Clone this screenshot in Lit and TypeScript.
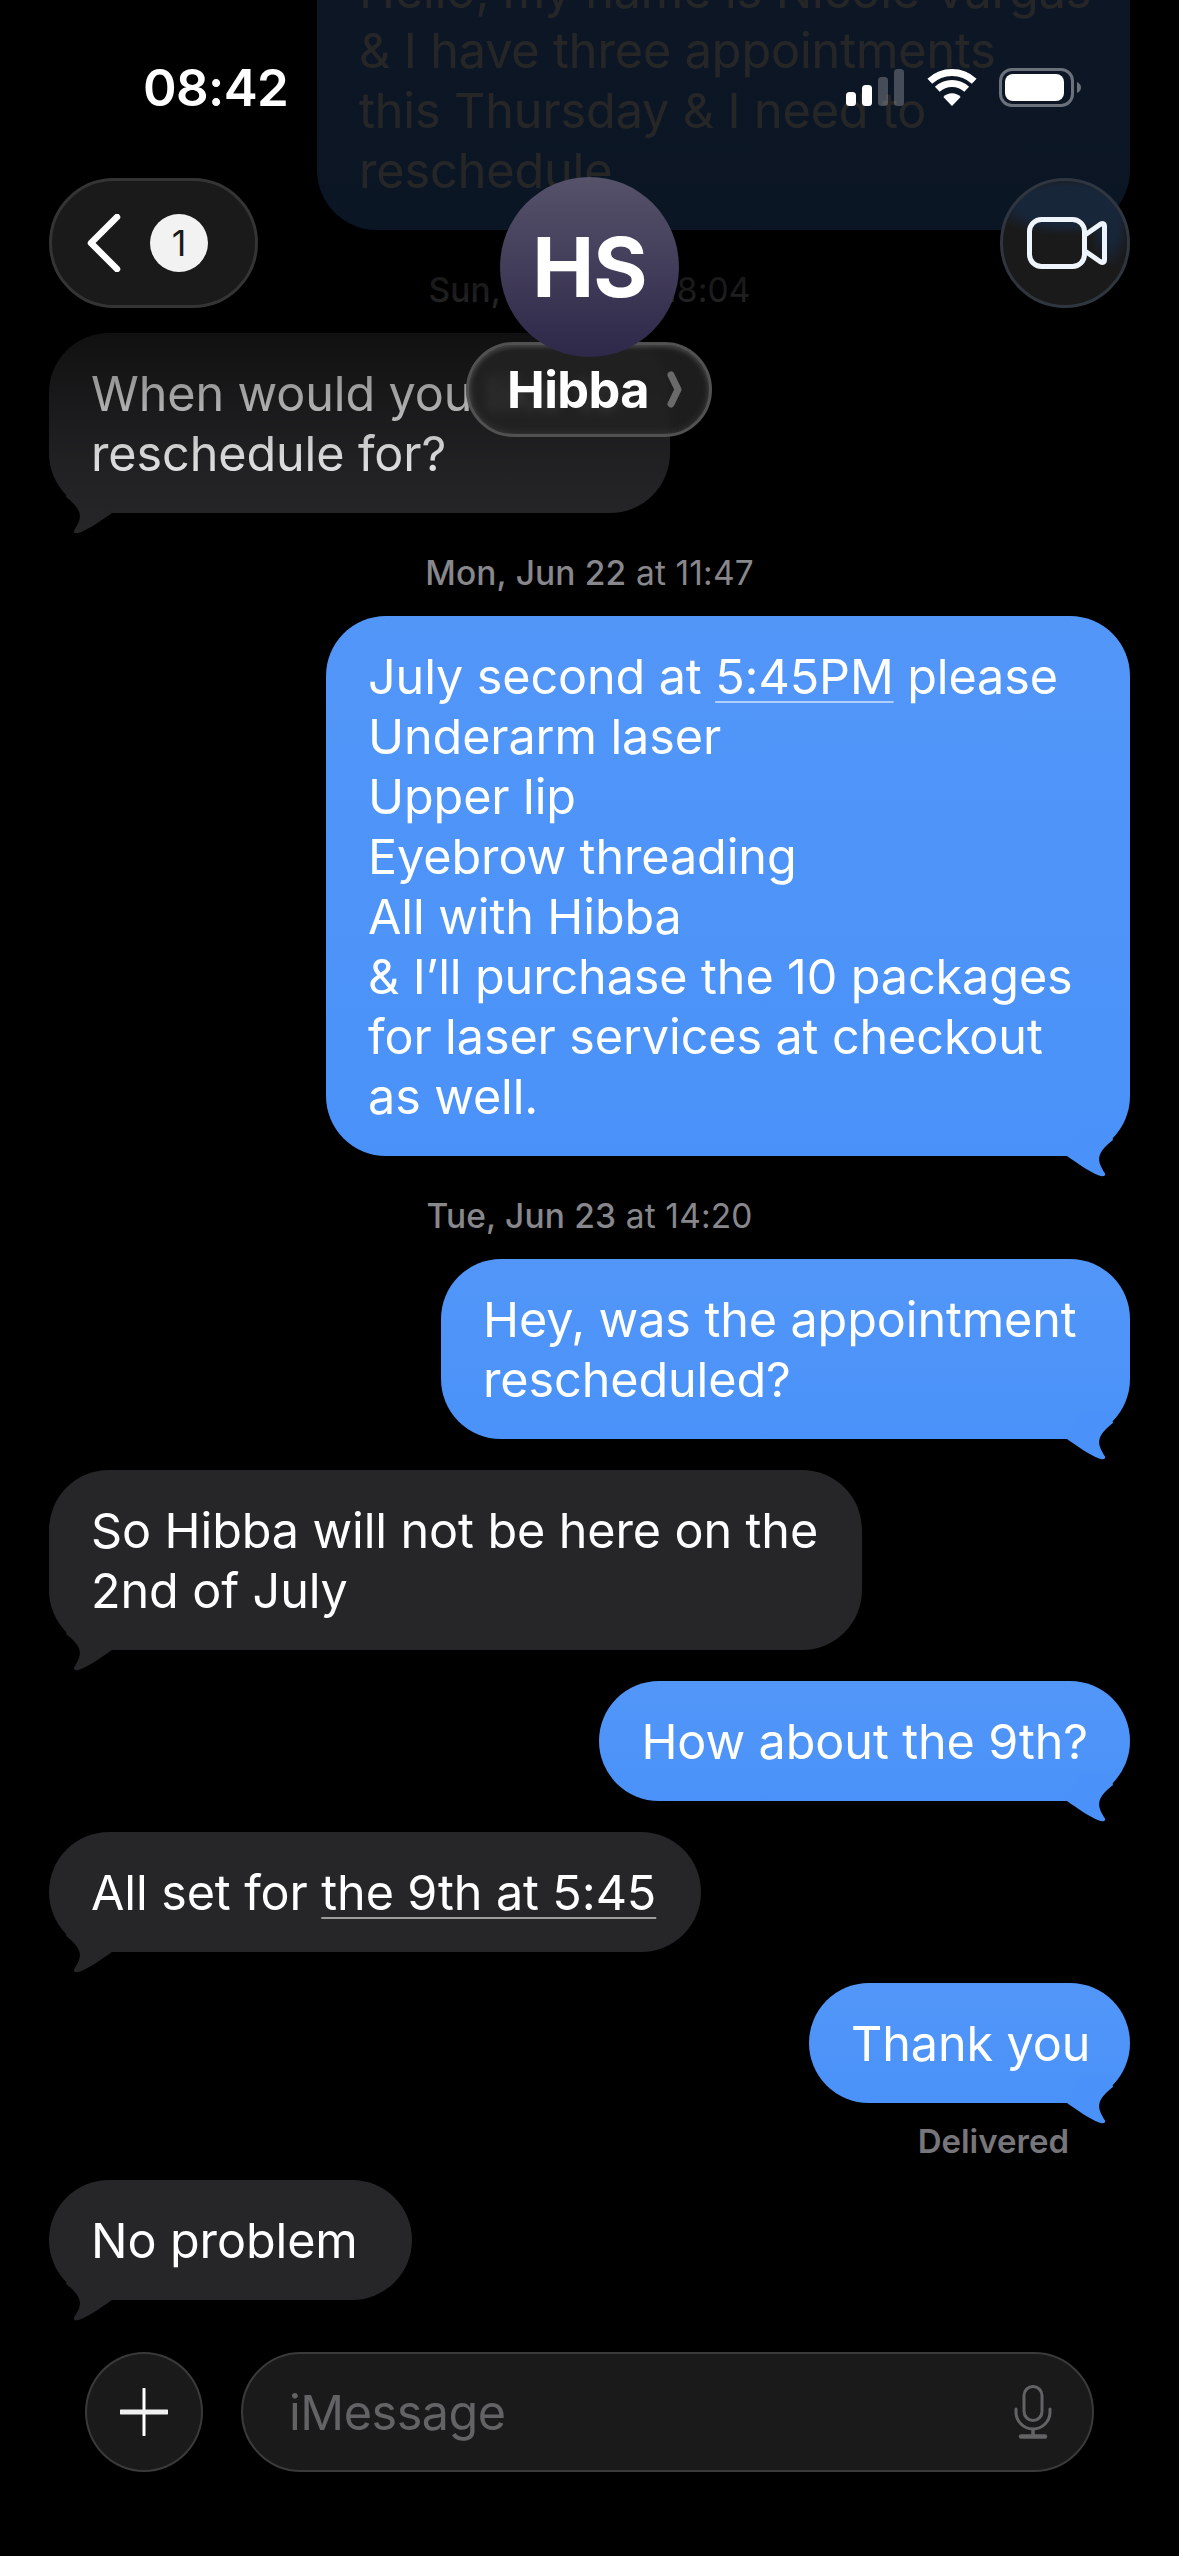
import { LitElement, html, css, svg } from 'lit';
import { customElement } from 'lit/decorators.js';

// tail is drawn for a right hand bubble, left ones get mirrored in css
const tail = html`<svg class="tail" width="70" height="52" viewBox="0 0 70 52">
  <path d="M7 30 C17 37 28 45 39 49.5 C43 51 46 50 45 47.5 C41 41 38 36 39.5 30 C41 25 46 19 53 14 L50 4 L20 4 Z" />
</svg>`;

const signal = svg`
  <rect x="0" y="24" width="10" height="14" rx="3.5" fill="#fff" />
  <rect x="16" y="17" width="10" height="21" rx="3.5" fill="#fff" />
  <rect x="32" y="9" width="10" height="29" rx="3.5" fill="#fff" fill-opacity=".24" />
  <rect x="48" y="1" width="10" height="37" rx="3.5" fill="#fff" fill-opacity=".24" />
`;

const wifi = svg`
  <g transform="translate(81 1)">
    <path d="M2.8 12.2 A32.5 32.5 0 0 1 47.2 12.2" fill="none" stroke="#fff" stroke-width="7" />
    <path d="M10.3 20.3 A21.5 21.5 0 0 1 39.7 20.3" fill="none" stroke="#fff" stroke-width="7" />
    <path d="M25 37 L16.4 28 A12 12 0 0 1 33.6 28 Z" fill="#fff" />
  </g>
`;

const battery = svg`
  <rect x="154.5" y="1.5" width="72" height="36" rx="11.5" fill="none" stroke="#6a717a" stroke-width="3" />
  <rect x="159" y="6" width="59" height="27" rx="8" fill="#fff" />
  <path d="M231 14 Q235 16 235 19.5 Q235 23 231 25 Z" fill="#6a717a" />
`;

@customElement('app-root')
export class AppRoot extends LitElement {
  static styles = css`
    :host {
      display: block;
      position: relative;
      width: 1179px;
      height: 2556px;
      overflow: hidden;
      background: #000;
      color: #fff;
      font-family: Inter, 'Liberation Sans', sans-serif;
    }

    .thread {
      display: flex;
      flex-direction: column;
      padding: 0 49px;
      margin-top: -70px;
    }

    .stamp {
      margin-top: 40px;
      height: 40px;
      line-height: 40px;
      text-align: center;
      font-size: 33.5px;
      letter-spacing: 0.15px;
      color: #87878c;
    }

    .stamp b {
      font-weight: 500;
    }

    .msg {
      position: relative;
      box-sizing: border-box;
      margin-top: 31px;
      padding: 31px 42px 29px;
      border-radius: 60px;
      font-size: 48.5px;
      line-height: 60px;
      letter-spacing: -0.1px;
      white-space: nowrap;
    }

    .stamp + .msg {
      margin-top: 23px;
    }

    .msg.in {
      align-self: flex-start;
      background: #262628;
    }

    .msg.out {
      align-self: flex-end;
      background: linear-gradient(#5296f8, #4a92f9);
    }

    .msg.opening {
      width: 813px;
      margin-top: 0;
    }

    .msg.question {
      width: 621px;
    }

    .msg.wide {
      width: 804px;
    }

    .msg.hey {
      width: 689px;
    }

    .msg.so {
      width: 813px;
    }

    .msg.set {
      width: 652px;
    }

    .msg.thanks {
      width: 321px;
    }

    .msg.short {
      width: 363px;
    }

    .msg u {
      text-decoration-color: rgba(255, 255, 255, 0.55);
      text-decoration-thickness: 2px;
      text-underline-offset: 7px;
    }

    .tail {
      position: absolute;
      right: 0;
      bottom: -22px;
    }

    .out .tail {
      fill: #4a92f9;
    }

    .in .tail {
      left: 0;
      right: auto;
      fill: #262628;
      transform: scaleX(-1);
    }

    .delivered {
      margin-top: 18px;
      padding-right: 61px;
      height: 40px;
      line-height: 40px;
      text-align: right;
      font-size: 33px;
      font-weight: 600;
      color: #77777b;
    }

    .delivered + .msg {
      margin-top: 19px;
    }

    .composer {
      display: flex;
      gap: 38px;
      margin-top: 52px;
      padding: 0 85px;
    }

    .plus {
      display: flex;
      align-items: center;
      justify-content: center;
      flex: none;
      width: 118px;
      height: 120px;
      box-sizing: border-box;
      border: 2px solid #3a3a3a;
      border-radius: 50%;
      background: #1a1a1a;
    }

    .field {
      display: flex;
      align-items: center;
      justify-content: space-between;
      flex: 1;
      height: 120px;
      box-sizing: border-box;
      padding: 0 40px 0 46px;
      border: 2px solid #3a3a3a;
      border-radius: 60px;
      background: #1a1a1a;
      font-size: 48.5px;
      letter-spacing: -0.45px;
      color: #636366;
    }

    .scrim {
      position: absolute;
      top: 0;
      left: 0;
      right: 0;
      height: 540px;
      background: linear-gradient(
        rgba(0, 0, 0, 0.85) 0,
        rgba(0, 0, 0, 0.85) 235px,
        rgba(0, 0, 0, 0.8) 291px,
        rgba(0, 0, 0, 0.52) 345px,
        rgba(0, 0, 0, 0.15) 460px,
        rgba(0, 0, 0, 0) 530px
      );
      pointer-events: none;
    }

    .status {
      position: absolute;
      top: 68px;
      left: 143px;
      right: 98px;
      display: flex;
      align-items: center;
      justify-content: space-between;
      height: 39px;
    }

    .time {
      font-size: 51px;
      font-weight: 600;
      letter-spacing: -0.6px;
    }

    .round {
      position: absolute;
      top: 178px;
      height: 130px;
      box-sizing: border-box;
      display: flex;
      align-items: center;
      border: 3px solid #343434;
      border-radius: 65px;
      background: #1a1a1a;
    }

    .back {
      left: 49px;
      width: 209px;
      padding-left: 35px;
      gap: 29px;
    }

    .badge {
      display: flex;
      align-items: center;
      justify-content: center;
      width: 58px;
      height: 58px;
      border-radius: 50%;
      background: #f2f2f2;
      color: #1a1a1a;
      font-size: 36px;
    }

    .video {
      left: 1000px;
      width: 130px;
      justify-content: center;
      padding-left: 4px;
      border-color: #2f3640;
      background: radial-gradient(ellipse 62% 24% at 52% 20%, #18263a 62%, rgba(24, 38, 58, 0) 100%),
        radial-gradient(ellipse 16% 34% at 86% 36%, #18263a 40%, rgba(24, 38, 58, 0) 100%), #1a1a1a;
    }

    .avatar {
      position: absolute;
      z-index: 1;
      top: 177px;
      left: 500px;
      width: 179px;
      height: 180px;
      display: flex;
      align-items: center;
      justify-content: center;
      border-radius: 50%;
      background: linear-gradient(#56526a, #2e2849);
      font-size: 83px;
      font-weight: 700;
      letter-spacing: -1px;
    }

    .name {
      position: absolute;
      top: 342px;
      left: 466px;
      width: 246px;
      height: 95px;
      box-sizing: border-box;
      display: flex;
      align-items: center;
      justify-content: flex-end;
      gap: 18px;
      padding: 0 27px 0 0;
      border: 3px solid #515151;
      border-radius: 48px;
      background: rgba(34, 34, 34, 0.84);
      backdrop-filter: blur(5px);
      box-shadow: inset 0 2px 4px rgba(255, 255, 255, 0.14), inset 0 0 10px rgba(255, 255, 255, 0.1);
      font-size: 50.5px;
      font-weight: 700;
      letter-spacing: -0.6px;
    }
  `;

  render() {
    return html`
      <div class="thread">
        <div class="msg out opening">
          Hello, my name is Nicole Vargas<br />
          &amp; I have three appointments<br />
          this Thursday &amp; I need to<br />
          reschedule
        </div>
        <div class="stamp"><b>Sun, Jun 21</b> at 18:04</div>
        <div class="msg in question">When would you like to<br />reschedule for?${tail}</div>
        <div class="stamp"><b>Mon, Jun 22</b> at 11:47</div>
        <div class="msg out wide">
          July second at <u>5:45PM</u> please<br />
          Underarm laser<br />
          Upper lip<br />
          Eyebrow threading<br />
          All with Hibba<br />
          &amp; I’ll purchase the 10 packages<br />
          for laser services at checkout<br />
          as well.${tail}
        </div>
        <div class="stamp"><b>Tue, Jun 23</b> at 14:20</div>
        <div class="msg out hey">Hey, was the appointment<br />rescheduled?${tail}</div>
        <div class="msg in so">So Hibba will not be here on the<br />2nd of July${tail}</div>
        <div class="msg out">How about the 9th?${tail}</div>
        <div class="msg in set">All set for <u>the 9th at 5:45</u>${tail}</div>
        <div class="msg out thanks">Thank you${tail}</div>
        <div class="delivered">Delivered</div>
        <div class="msg in short">No problem${tail}</div>
      </div>

      <div class="composer">
        <div class="plus">
          <svg width="48" height="48" viewBox="0 0 48 48">
            <path d="M24 1V47" stroke="#fff" stroke-width="3" stroke-linecap="round" />
            <path d="M1 24H47" stroke="#f0f0f0" stroke-width="5" stroke-linecap="round" />
          </svg>
        </div>
        <div class="field">
          <span>iMessage</span>
          <svg width="38" height="54" viewBox="0 0 38 54" fill="none" stroke="#636366">
            <rect x="10" y="1.5" width="18" height="34" rx="9" stroke-width="3" />
            <path d="M2 24V27A17 17 0 0 0 36 27V24" stroke-width="3" stroke-linecap="round" />
            <path d="M19 44V50" stroke-width="3.5" />
            <path d="M7 51.5H31" stroke-width="4.5" stroke-linecap="round" />
          </svg>
        </div>
      </div>

      <div class="scrim"></div>

      <div class="status">
        <span class="time">08:42</span>
        <svg width="235" height="39" viewBox="0 0 235 39">${signal}${wifi}${battery}</svg>
      </div>

      <div class="round back">
        <svg width="34" height="58" viewBox="0 0 34 58" fill="none">
          <path d="M30 3 L4 29 L30 55" stroke="#fff" stroke-width="6.5" stroke-linecap="round" stroke-linejoin="round" />
        </svg>
        <span class="badge">1</span>
      </div>

      <div class="avatar">HS</div>
      <div class="name">
        <span>Hibba</span>
        <svg width="15" height="37" viewBox="0 0 15 37" fill="none">
          <path d="M4 4 L11 18.5 L4 33" stroke="#6a6a6a" stroke-width="7" stroke-linecap="round" stroke-linejoin="round" />
        </svg>
      </div>

      <div class="round video">
        <svg width="80" height="52" viewBox="0 0 80 52" fill="none" stroke="#eef4fb" stroke-width="5" stroke-linejoin="round">
          <rect x="2.5" y="2.5" width="55" height="47" rx="12" />
          <path d="M58 18 L73 7.5 Q77.5 5 77.5 9.5 V42.5 Q77.5 47 73 44.5 L58 34" />
        </svg>
      </div>
    `;
  }
}
